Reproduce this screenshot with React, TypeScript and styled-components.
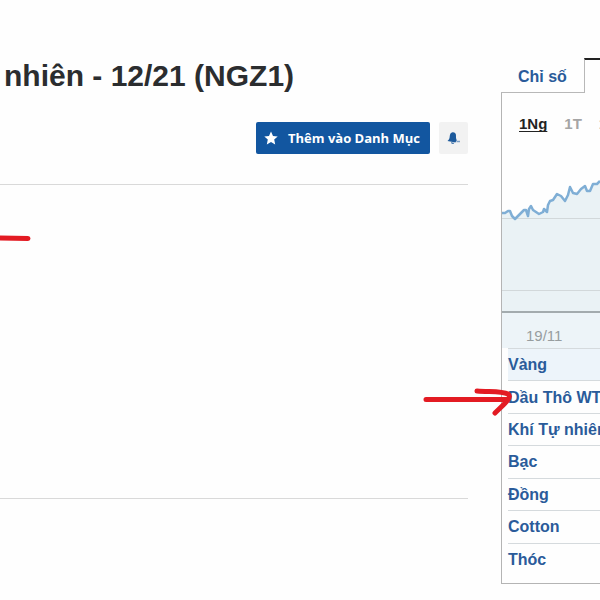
import React from 'react';
import styled, { createGlobalStyle } from 'styled-components';

const GlobalStyle = createGlobalStyle`
  * { box-sizing: border-box; }
  body {
    margin: 0;
    background: #fefefe;
    color: #2b2d2f;
    font-family: "Liberation Sans", Arial, sans-serif;
    overflow-x: hidden;
  }
  ul { list-style: none; margin: 0; padding: 0; }
  a { text-decoration: none; }
`;

const Page = styled.div`
  position: relative;
  display: grid;
  grid-template-columns: minmax(0, 1fr) 99px;
  column-gap: 33px;
  align-items: start;
  padding: 58px 0 15px;
  overflow: hidden;
`;

const Main = styled.main`
  display: flex;
  flex-direction: column;
`;

const Title = styled.h1`
  margin: 0;
  padding-left: 4px;
  font-size: 30px;
  line-height: 36px;
  font-weight: bold;
  white-space: nowrap;
`;

const Actions = styled.div`
  display: flex;
  justify-content: flex-end;
  gap: 9px;
  margin: 28px 0 30px;
`;

const AddButton = styled.button`
  display: flex;
  align-items: center;
  gap: 10px;
  height: 32px;
  padding: 0 10px 0 8px;
  border: 0;
  border-radius: 2px;
  background: #1256a0;
  color: #fff;
  font: bold 13px/16px "Open Sans", "Liberation Sans", sans-serif;
  white-space: nowrap;
`;

const AlertButton = styled.button`
  display: grid;
  place-items: center;
  width: 29px;
  height: 32px;
  padding: 0;
  border: 0;
  border-radius: 2px;
  background: #f2f2f2;
`;

const Content = styled.section`
  min-height: 315px;
  border-top: 1px solid #d9d9d9;
  border-bottom: 1px solid #d9d9d9;
`;

const Sidebar = styled.aside`
  min-width: 0;
  overflow: hidden;
  white-space: nowrap;
`;

const Tabs = styled.nav`
  display: flex;
  height: 35px;
`;

const Tab = styled.a<{ $active?: boolean }>`
  flex: ${(p) => (p.$active ? '1 0 16px' : '0 0 83px')};
  padding: ${(p) => (p.$active ? '0' : '10px 0 0 17px')};
  border-top: ${(p) => (p.$active ? '2px solid #222' : '0')};
  border-left: ${(p) => (p.$active ? '1px solid #b8b8b8' : '0')};
  border-bottom: ${(p) => (p.$active ? '0' : '1px solid #b8b8b8')};
  color: #2a5b9a;
  font-size: 16px;
  line-height: 18px;
  font-weight: bold;
`;

const Panel = styled.div`
  border-left: 1px solid #b4b4b4;
  border-bottom: 1px solid #b4b4b4;
  padding-bottom: 8px;
`;

const Ranges = styled.div`
  display: flex;
  gap: 17px;
  padding: 22px 0 17px 17px;
`;

const Range = styled.button<{ $active?: boolean }>`
  flex: none;
  padding: 0;
  border: 0;
  background: none;
  color: ${(p) => (p.$active ? '#222' : '#a5a5a5')};
  font: bold 15px/18px "Liberation Sans", Arial, sans-serif;
  text-decoration: ${(p) => (p.$active ? 'underline' : 'none')};
  text-decoration-skip-ink: none;
  text-underline-offset: 2px;
`;

const Chart = styled.svg`
  display: block;
  width: 100%;
  height: 161px;
`;

const Axis = styled.div`
  height: 37px;
  padding: 14px 0 0 24px;
  border-top: 2px solid #a3abae;
  background: #edf4f8;
  color: #979d9f;
  font-size: 15px;
  line-height: 18px;
`;

const Quotes = styled.ul`
  display: grid;
  grid-auto-rows: 1fr;
  min-height: 227px;
  margin-left: 6px;
`;

const Quote = styled.li<{ $selected?: boolean }>`
  display: flex;
  align-items: center;
  min-width: 0;
  padding-top: 1px;
  border-top: 1px solid #d5dadd;
  background: ${(p) => (p.$selected ? '#edf4fa' : 'transparent')};
`;

const QuoteLink = styled.a`
  color: #2a5b9a;
  font-size: 16px;
  line-height: 20px;
  font-weight: bold;
`;

const StrokeMark = styled.svg`
  position: absolute;
  left: 0;
  top: 232px;
  pointer-events: none;
`;

const ArrowMark = styled.svg`
  position: absolute;
  right: 84px;
  top: 384px;
  pointer-events: none;
`;

const line =
  '0,63 3,63 6,61 8,61 10,66 13,69 17,65 22,60 24,60 26,66 27,59 29,56 31,60 34,62 37,64 41,62 42,59 45,62 46,55 48,51 51,50 55,44 59,46 63,51 66,45 68,37 71,43 75,44 79,39 83,36 85,41 88,41 91,34 95,34 98,31';

const quotes = ['Vàng', 'Dầu Thô WTI', 'Khí Tự nhiên', 'Bạc', 'Đồng', 'Cotton', 'Thóc'];

export default function App() {
  return (
    <>
      <GlobalStyle />
      <Page>
        <Main>
          <Title>nhiên - 12/21 (NGZ1)</Title>
          <Actions>
            <AddButton type="button">
              <svg width="14" height="14" viewBox="0 0 14 14" aria-hidden="true">
                <path
                  fill="#fff"
                  d="M7 .4l2 4.500 4.700.5-3.500 3.200 1 4.800L7 11l-4.200 2.400 1-4.800L.3 5.400 5 4.900z"
                />
              </svg>
              Thêm vào Danh Mục
            </AddButton>
            <AlertButton type="button" aria-label="Tạo cảnh báo">
              <svg width="15" height="15" viewBox="0 0 15 15" aria-hidden="true">
                <path
                  fill="#1d5a9c"
                  d="M6 1.400c2.600-.5 4.100 1 4 3.300-.1 2 .1 3.200.8 4.500L9.400 11.600 1.500 10c1.600-1.200 2-2.300 2.200-4.500C3.900 3.400 4.300 1.900 6 1.400zM5 11.200l3.200.7c-.6 1.500-3 1.100-3.200-.7z"
                />
                <path d="M10.500 10.500h3.500" stroke="#7d9fc4" strokeWidth="1.500" />
              </svg>
            </AlertButton>
          </Actions>
          <Content />
        </Main>
        <Sidebar>
          <Tabs>
            <Tab href="#indices">Chỉ số</Tab>
            <Tab href="#commodities" $active aria-label="Hàng hóa" />
          </Tabs>
          <Panel>
            <Ranges>
              <Range type="button" $active>1Ng</Range>
              <Range type="button">1T</Range>
              <Range type="button">1Th</Range>
            </Ranges>
            <Chart viewBox="0 0 98 161" preserveAspectRatio="none" aria-hidden="true">
              <polygon points={`${line} 98,161 0,161`} fill="#eaf2f5" />
              <path d="M0 68.500H98M0 140.500H98" stroke="#d2d8da" />
              <polyline
                points={line}
                fill="none"
                stroke="#7faed5"
                strokeWidth="2.500"
                strokeLinejoin="round"
                vectorEffect="non-scaling-stroke"
              />
            </Chart>
            <Axis>19/11</Axis>
            <Quotes>
              {quotes.map((name, i) => (
                <Quote key={name} $selected={i === 0}>
                  <QuoteLink href="#quote">{name}</QuoteLink>
                </Quote>
              ))}
            </Quotes>
          </Panel>
        </Sidebar>
        <StrokeMark width="34" height="12" viewBox="0 0 34 12" aria-hidden="true">
          <path d="M0 6L28 6.500" stroke="#e31b23" strokeWidth="5" strokeLinecap="round" />
        </StrokeMark>
        <ArrowMark width="94" height="34" viewBox="0 0 94 34" aria-hidden="true">
          <path
            d="M4 15.500H84M55 7C68 8 80 7 86 10C91 13 82 20 73 29"
            fill="none"
            stroke="#e31b23"
            strokeWidth="5"
            strokeLinecap="round"
            strokeLinejoin="round"
          />
        </ArrowMark>
      </Page>
    </>
  );
}
